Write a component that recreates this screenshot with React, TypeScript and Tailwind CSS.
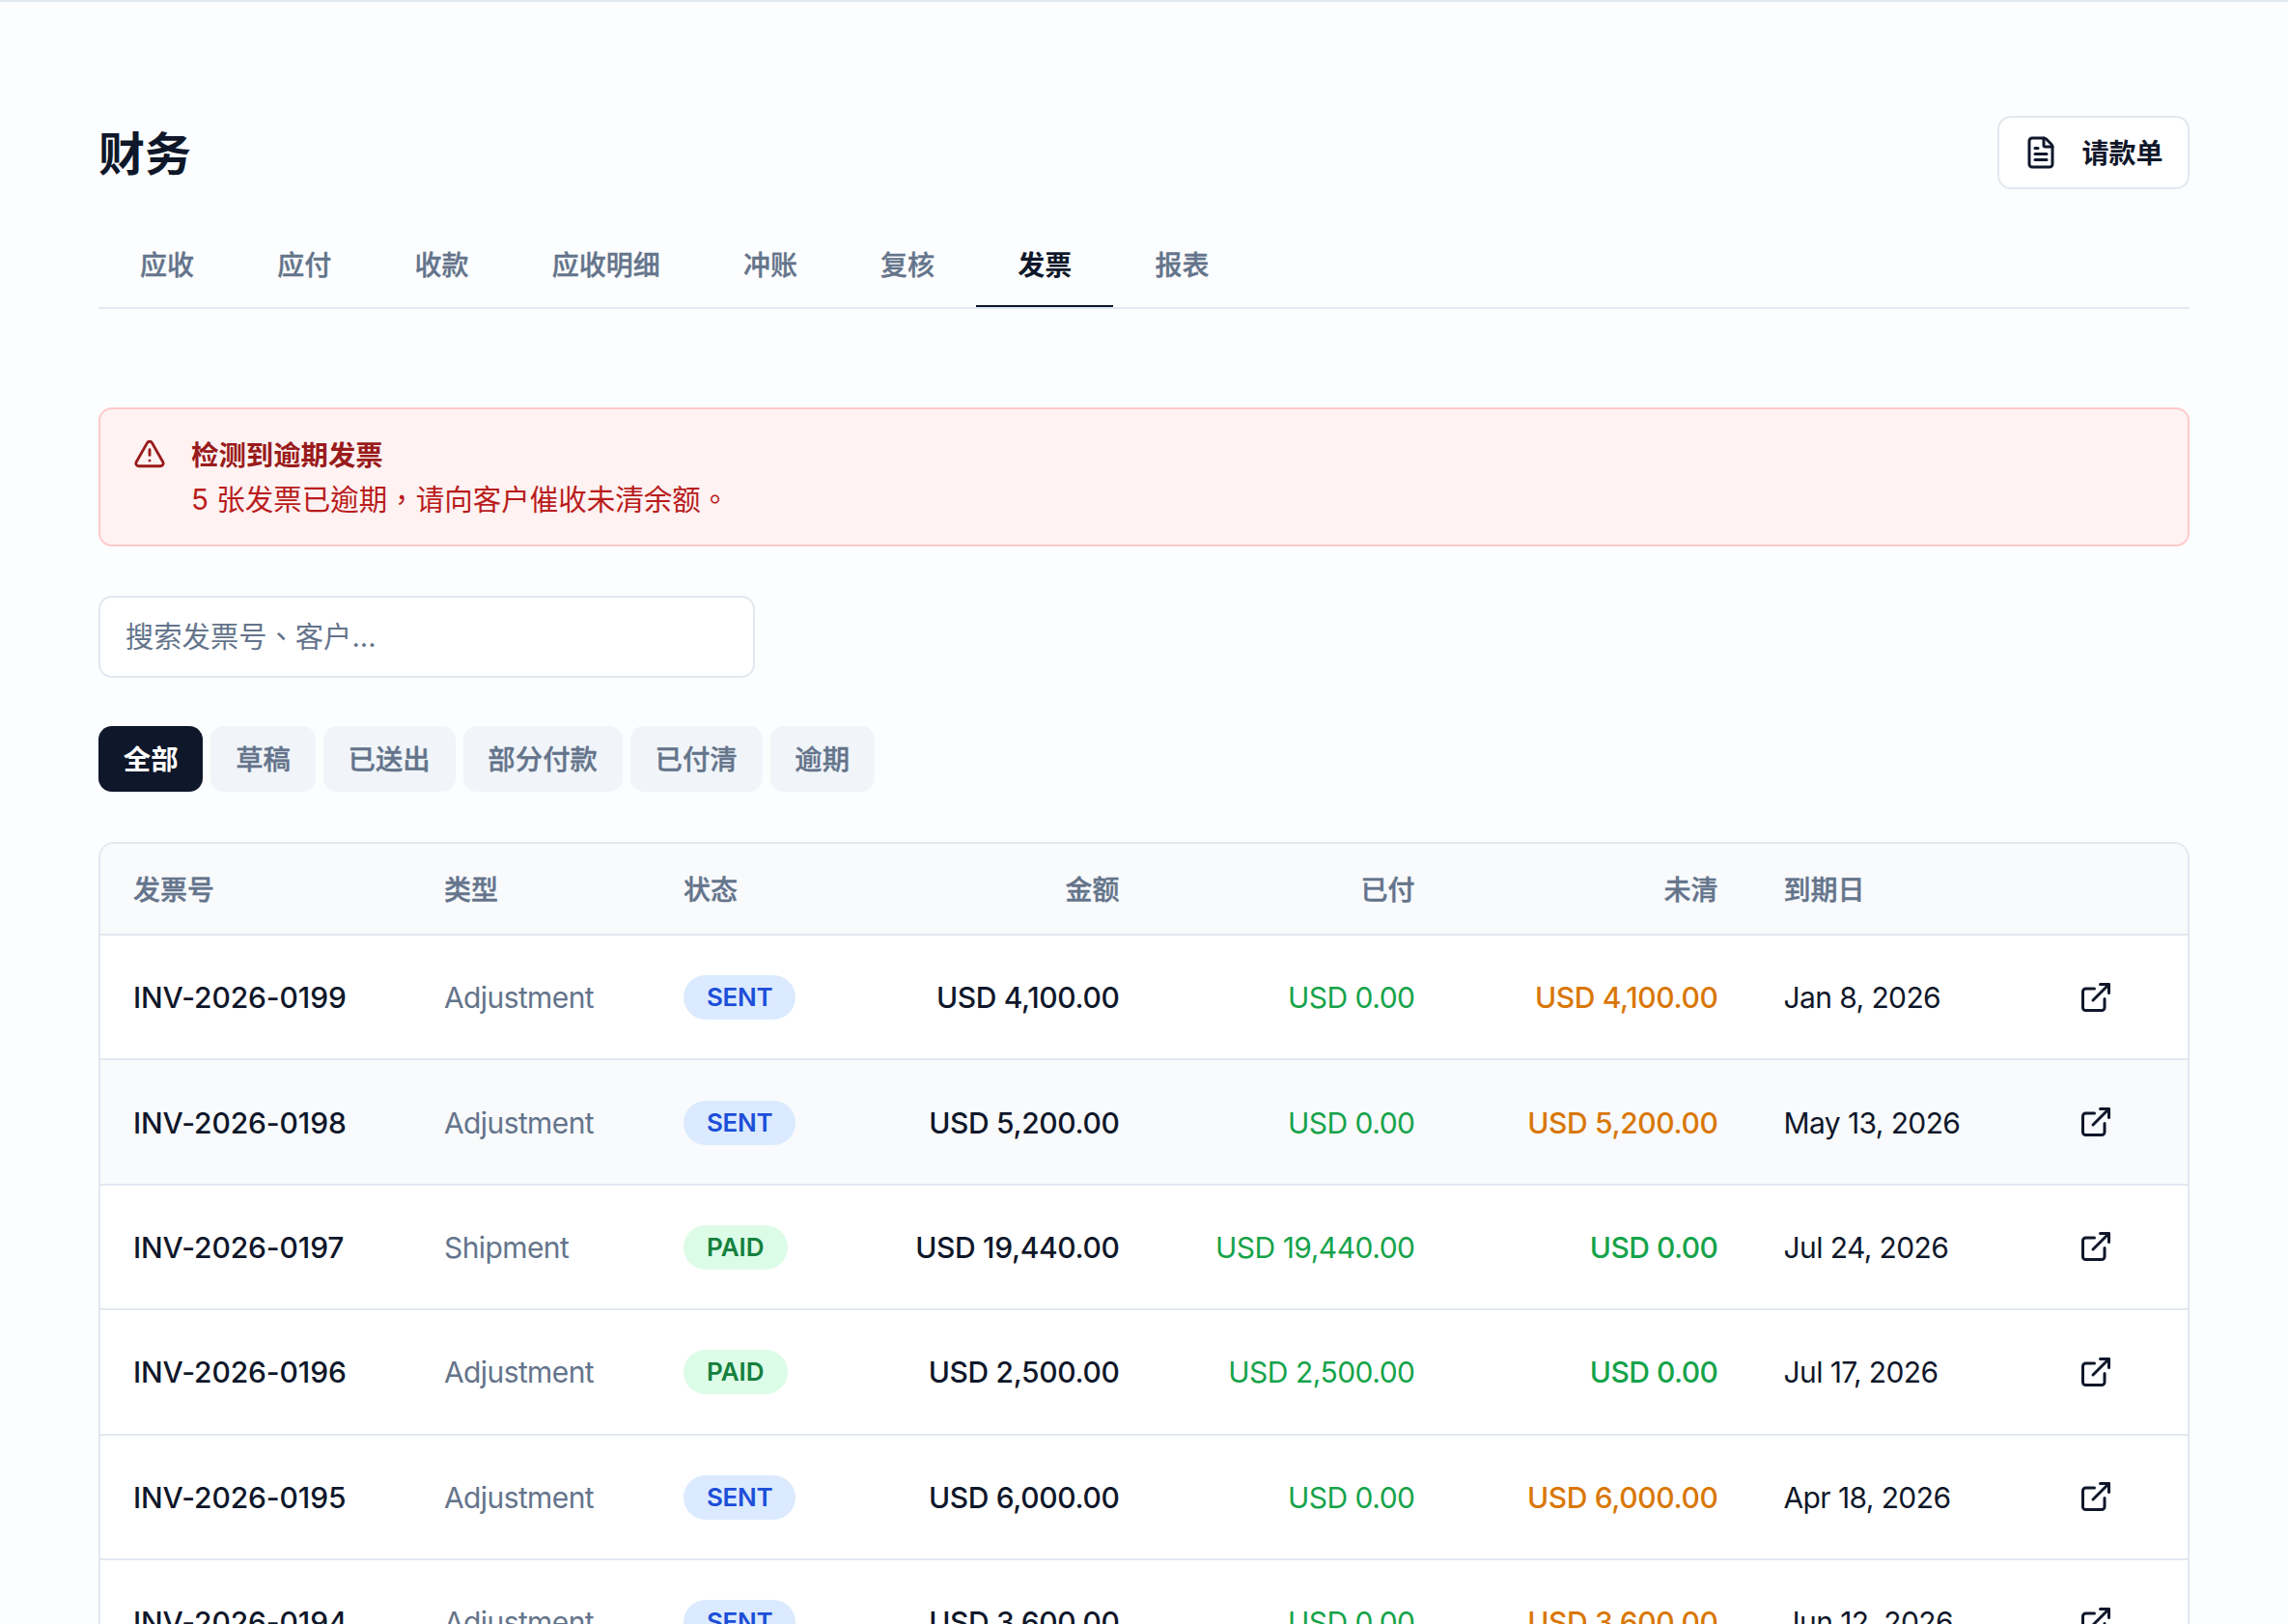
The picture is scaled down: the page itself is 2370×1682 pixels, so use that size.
import { ExternalLink, FileText, TriangleAlert } from "lucide-react";

const tabs = ["应收", "应付", "收款", "应收明细", "冲账", "复核", "发票", "报表"];
const filters = ["全部", "草稿", "已送出", "部分付款", "已付清", "逾期"];

const invoices = [
  { no: "INV-2026-0199", type: "Adjustment", status: "SENT", amount: "USD 4,100.00", paid: "USD 0.00", open: "USD 4,100.00", due: "Jan 8, 2026" },
  { no: "INV-2026-0198", type: "Adjustment", status: "SENT", amount: "USD 5,200.00", paid: "USD 0.00", open: "USD 5,200.00", due: "May 13, 2026" },
  { no: "INV-2026-0197", type: "Shipment", status: "PAID", amount: "USD 19,440.00", paid: "USD 19,440.00", open: "USD 0.00", due: "Jul 24, 2026" },
  { no: "INV-2026-0196", type: "Adjustment", status: "PAID", amount: "USD 2,500.00", paid: "USD 2,500.00", open: "USD 0.00", due: "Jul 17, 2026" },
  { no: "INV-2026-0195", type: "Adjustment", status: "SENT", amount: "USD 6,000.00", paid: "USD 0.00", open: "USD 6,000.00", due: "Apr 18, 2026" },
  { no: "INV-2026-0194", type: "Adjustment", status: "SENT", amount: "USD 3,600.00", paid: "USD 0.00", open: "USD 3,600.00", due: "Jun 12, 2026" },
];

export default function App() {
  return (
    <div className="h-screen overflow-hidden border-t-2 border-[#e2e8f0] bg-[#fcfdfe] px-[102px] pt-[118px] font-['Inter','Noto_Sans_CJK_SC',sans-serif] text-[#0f172a]">
      <div className="flex items-center justify-between">
        <h1 className="pt-[3px] text-[48px] leading-[73px] font-bold">财务</h1>
        <button className="flex h-[76px] items-center gap-[24px] rounded-[14px] border-2 border-[#e2e8f0] bg-white pr-[25.5px] pl-[25px] text-[28px] font-semibold">
          <FileText size={36} strokeWidth={2} />
          <span className="pt-[2px]">请款单</span>
        </button>
      </div>

      <div className="mt-[35.5px] flex border-b-2 border-[#e2e8f0]">
        {tabs.map((tab) => (
          <div
            key={tab}
            className={
              tab === "发票"
                ? "border-b-2 border-[#0f172a] px-[43.1px] pt-[21px] pb-[19px] text-[28px] leading-[44px] font-semibold text-[#0f172a]"
                : "border-b-2 border-transparent px-[43.1px] pt-[21px] pb-[19px] text-[28px] leading-[44px] font-medium text-[#64748b] [-webkit-text-stroke:0.35px_#64748b]"
            }
          >
            {tab}
          </div>
        ))}
      </div>

      <div className="mt-[102.5px] flex gap-[26px] rounded-[14px] border-2 border-[#fecaca] bg-[#fef2f2] px-[34px] pt-[25px] pb-[24px] leading-[45px]">
        <TriangleAlert size={34} strokeWidth={2} className="mt-[4px] text-[#991b1b]" />
        <div>
          <div className="text-[28.4px] font-semibold text-[#991b1b]">检测到逾期发票</div>
          <div className="mt-[1px] font-['Inter','Noto_Sans_CJK_TC',sans-serif] text-[29.5px] text-[#b91c1c]">5 张发票已逾期，请向客户催收未清余额。</div>
        </div>
      </div>

      <input
        placeholder="搜索发票号、客户..."
        className="mt-[50.5px] block h-[85px] w-[680px] rounded-[14px] border-2 border-[#e2e8f0] bg-white px-[26px] font-['Inter','Noto_Sans_CJK_TC',sans-serif] text-[29.3px] placeholder:text-[#64748b]"
      />

      <div className="mt-[50px] flex gap-[8px]">
        {filters.map((f) => (
          <div
            key={f}
            className={
              f === "全部"
                ? "flex h-[68px] items-center rounded-[14px] bg-[#0f172a] px-[25.8px] pt-[3px] text-[28.4px] font-semibold text-white"
                : "flex h-[68px] items-center rounded-[14px] bg-[#f1f5f9] px-[25.8px] pt-[3px] text-[28.4px] font-medium text-[#64748b] [-webkit-text-stroke:0.35px_#64748b]"
            }
          >
            {f}
          </div>
        ))}
      </div>

      <div className="mt-[52.5px] overflow-hidden rounded-[16px] border-2 border-[#e2e8f0] bg-white">
        <table className="w-full table-fixed border-separate border-spacing-0">
          <colgroup>
            <col className="w-[322px]" />
            <col className="w-[248px]" />
            <col className="w-[230px]" />
            <col className="w-[289.5px]" />
            <col className="w-[306px]" />
            <col className="w-[314px]" />
            <col className="w-[306px]" />
            <col />
          </colgroup>
          <thead>
            <tr className="bg-[#f8fafc] text-[28px] text-[#64748b] [-webkit-text-stroke:0.4px_#64748b]">
              <th className="h-[95px] border-b-2 border-[#e2e8f0] px-[34px] pt-[2px] text-left font-medium">发票号</th>
              <th className="border-b-2 border-[#e2e8f0] px-[34px] pt-[2px] text-left font-medium">类型</th>
              <th className="border-b-2 border-[#e2e8f0] px-[34px] pt-[2px] text-left font-medium">状态</th>
              <th className="border-b-2 border-[#e2e8f0] px-[34px] pt-[2px] text-right font-medium">金额</th>
              <th className="border-b-2 border-[#e2e8f0] px-[34px] pt-[2px] text-right font-medium">已付</th>
              <th className="border-b-2 border-[#e2e8f0] px-[34px] pt-[2px] text-right font-medium">未清</th>
              <th className="border-b-2 border-[#e2e8f0] px-[34px] pt-[2px] text-left font-medium">到期日</th>
              <th className="border-b-2 border-[#e2e8f0]"></th>
            </tr>
          </thead>
          <tbody>
            {invoices.map((inv, i) => (
              <tr key={inv.no} className={i === 1 ? "bg-[#f8fafc] text-[30px]" : "text-[30px]"}>
                <td className="h-[129.4px] border-b-2 border-[#e2e8f0] px-[34px] pt-[2px] font-medium tracking-[-0.12px]">{inv.no}</td>
                <td className="border-b-2 border-[#e2e8f0] px-[34px] pt-[2px] tracking-[-0.6px] text-[#64748b]">{inv.type}</td>
                <td className="border-b-2 border-[#e2e8f0] px-[34px]">
                  <span
                    className={
                      inv.status === "SENT"
                        ? "inline-block h-[46px] rounded-full bg-[#dbeafe] px-[24px] text-[26px] leading-[46px] font-semibold tracking-[-0.3px] text-[#1d4ed8]"
                        : "inline-block h-[46px] rounded-full bg-[#dcfce7] px-[24px] text-[26px] leading-[46px] font-semibold text-[#15803d]"
                    }
                  >
                    {inv.status}
                  </span>
                </td>
                <td className="border-b-2 border-[#e2e8f0] px-[34px] pt-[2px] text-right font-medium tracking-[-0.35px]">{inv.amount}</td>
                <td className="border-b-2 border-[#e2e8f0] px-[34px] pt-[2px] text-right tracking-[-0.5px] text-[#16a34a]">{inv.paid}</td>
                <td
                  className={
                    inv.open === "USD 0.00"
                      ? "border-b-2 border-[#e2e8f0] px-[34px] pt-[2px] text-right font-medium tracking-[-0.5px] text-[#16a34a]"
                      : "border-b-2 border-[#e2e8f0] px-[34px] pt-[2px] text-right font-medium tracking-[-0.35px] text-[#d97706]"
                  }
                >
                  {inv.open}
                </td>
                <td className="border-b-2 border-[#e2e8f0] px-[34px] pt-[2px] tracking-[-0.6px]">{inv.due}</td>
                <td className="border-b-2 border-[#e2e8f0] pl-[33px]">
                  <ExternalLink size={36} strokeWidth={2} />
                </td>
              </tr>
            ))}
          </tbody>
        </table>
      </div>
    </div>
  );
}
